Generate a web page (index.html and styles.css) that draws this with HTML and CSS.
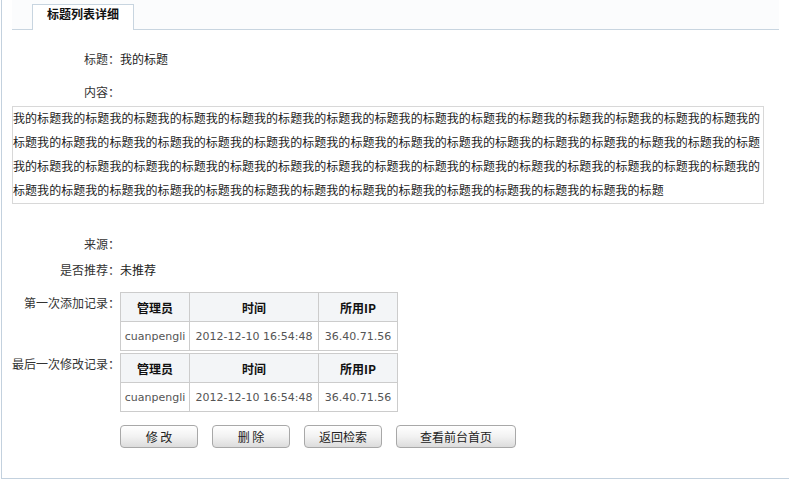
FILE: index.html
```html
<!DOCTYPE html>
<html lang="zh-CN">
<head>
<meta charset="utf-8">
<title>标题列表详细</title>
<link rel="stylesheet" href="styles.css">
</head>
<body>
<div class="frame">
  <div class="tabbar">
    <div class="tab">标题列表详细</div>
  </div>
  <div class="content">
    <div class="row r-title"><div class="label">标题：</div><div class="value">我的标题</div></div>
    <div class="row r-body"><div class="label">内容：</div><div class="value"></div></div>
    <div class="textbox">我的标题我的标题我的标题我的标题我的标题我的标题我的标题我的标题我的标题我的标题我的标题我的标题我的标题我的标题我的标题我的标题我的标题我的标题我的标题我的标题我的标题我的标题我的标题我的标题我的标题我的标题我的标题我的标题我的标题我的标题我的标题我的标题我的标题我的标题我的标题我的标题我的标题我的标题我的标题我的标题我的标题我的标题我的标题我的标题我的标题我的标题我的标题我的标题我的标题我的标题我的标题我的标题我的标题我的标题我的标题我的标题我的标题我的标题我的标题我的标题</div>
    <div class="row r-src"><div class="label">来源：</div><div class="value"></div></div>
    <div class="row r-rec"><div class="label">是否推荐：</div><div class="value">未推荐</div></div>
    <div class="row r-log first">
      <div class="label">第一次添加记录：</div>
      <table class="log">
        <tr><th class="c1">管理员</th><th class="c2">时间</th><th class="c3">所用IP</th></tr>
        <tr><td>cuanpengli</td><td>2012-12-10 16:54:48</td><td>36.40.71.56</td></tr>
      </table>
    </div>
    <div class="row r-log second">
      <div class="label">最后一次修改记录：</div>
      <table class="log">
        <tr><th class="c1">管理员</th><th class="c2">时间</th><th class="c3">所用IP</th></tr>
        <tr><td>cuanpengli</td><td>2012-12-10 16:54:48</td><td>36.40.71.56</td></tr>
      </table>
    </div>
    <div class="buttons">
      <button class="btn">修 改</button>
      <button class="btn">删 除</button>
      <button class="btn">返回检索</button>
      <button class="btn wide">查看前台首页</button>
    </div>
  </div>
</div>
</body>
</html>
```

FILE: styles.css
```css
html, body {
  margin: 0;
  padding: 0;
  background: #ffffff;
}
body {
  font-family: "Liberation Sans", "Noto Sans CJK SC", sans-serif;
  font-size: 12px;
  color: #222;
}
.frame {
  margin-left: 1px;
  width: 820px;
  height: 478px;
  border-left: 1px solid #c3d1de;
  border-bottom: 1px solid #c3d1de;
  overflow: hidden;
}
.tabbar {
  margin-left: 10px;
  width: 767px;
  height: 29px;
  border-bottom: 1px solid #c8d5e0;
  background: #fbfcfd;
  display: flex;
  align-items: flex-end;
}
.tab {
  margin-left: 20px;
  margin-bottom: -1px;
  width: 100px;
  height: 25px;
  border: 1px solid #c8d5e0;
  border-bottom: none;
  background: #ffffff;
  font-weight: bold;
  color: #111;
  text-align: center;
  line-height: 20px;
}
.content {
  padding-left: 10px;
}
.row {
  display: flex;
  align-items: flex-start;
}
.label {
  width: 108px;
  text-align: right;
  line-height: 24px;
  color: #333;
}
.value {
  line-height: 24px;
  color: #222;
}
.r-title { margin-top: 18px; height: 24px; }
.r-body { margin-top: 9px; height: 24px; }
.textbox {
  margin-top: 1px;
  width: 750px;
  border: 1px solid #d8d8d8;
  line-height: 24px;
  color: #222;
  word-break: break-all;
  letter-spacing: 0.05px;
}
.r-src { margin-top: 28px; height: 26px; }
.r-src .label, .r-src .value, .r-rec .label, .r-rec .value { line-height: 26px; }
.r-rec { height: 26px; }
.r-log .label { line-height: 20px; padding-top: 2px; }
.first { margin-top: 8px; }
.second { margin-top: 2px; }
.log {
  border-collapse: collapse;
}
.log th, .log td {
  border: 1px solid #cccccc;
  height: 28px;
  padding: 0;
  text-align: center;
}
.log th {
  background: #f3f5f7;
  font-weight: bold;
  color: #111;
  font-family: "Noto Sans CJK SC", "Liberation Serif", serif;
}
.log td {
  color: #555;
  background: #fff;
  font-family: "DejaVu Sans", "Noto Sans CJK SC", sans-serif;
  font-size: 11px;
}
.log .c1 { width: 68px; }
.log .c2 { width: 128px; }
.log .c3 { width: 78px; }
.buttons {
  display: flex;
  gap: 14px;
  margin-top: 13px;
  margin-left: 108px;
}
.btn {
  width: 78px;
  height: 23px;
  padding: 0;
  border: 1px solid #a8a8a8;
  border-radius: 4px;
  background: linear-gradient(#ffffff, #f2f2f2 50%, #dcdcdc);
  font-family: "Noto Sans CJK SC", sans-serif;
  font-size: 12px;
  color: #222;
  line-height: 20px;
}
.btn.wide { width: 120px; }
```
